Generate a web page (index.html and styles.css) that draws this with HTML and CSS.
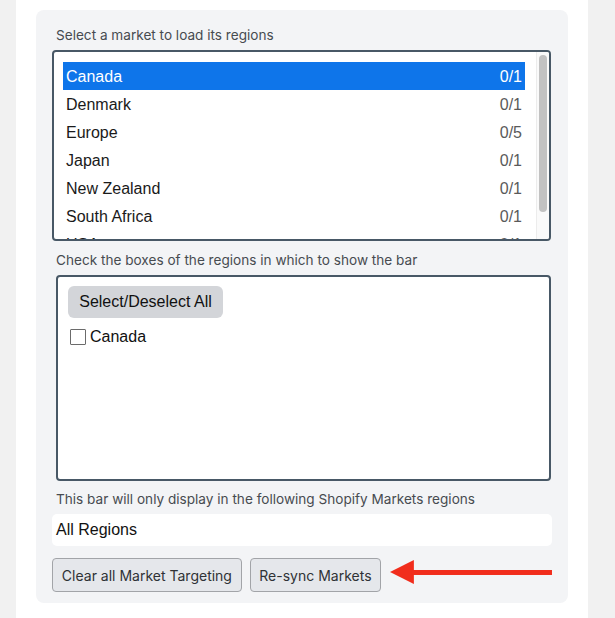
FILE: index.html
```html
<!DOCTYPE html>
<html>
<head>
<meta charset="utf-8">
<link rel="stylesheet" href="styles.css">
</head>
<body>
<div class="panel">
  <div class="card">
    <div class="label">Select a market to load its regions</div>
    <div class="listbox">
      <div class="list">
        <div class="row selected"><span>Canada</span><span class="count">0/1</span></div>
        <div class="row"><span>Denmark</span><span class="count">0/1</span></div>
        <div class="row"><span>Europe</span><span class="count">0/5</span></div>
        <div class="row"><span>Japan</span><span class="count">0/1</span></div>
        <div class="row"><span>New Zealand</span><span class="count">0/1</span></div>
        <div class="row"><span>South Africa</span><span class="count">0/1</span></div>
        <div class="row"><span>USA</span><span class="count">0/1</span></div>
      </div>
      <div class="scrollbar"><div class="thumb"></div></div>
    </div>
    <div class="label gap">Check the boxes of the regions in which to show the bar</div>
    <div class="regions">
      <button class="select-all">Select/Deselect All</button>
      <label class="check"><span class="box"></span><span>Canada</span></label>
    </div>
    <div class="label gap2">This bar will only display in the following Shopify Markets regions</div>
    <div class="field">All Regions</div>
    <div class="actions">
      <button class="btn btn-clear">Clear all Market Targeting</button>
      <button class="btn btn-sync">Re-sync Markets</button>
      <svg class="arrow" width="163" height="24" viewBox="0 0 163 24">
        <polygon points="0,12 24,0 24,24" fill="#f12d1c"/>
        <rect x="22" y="10" width="141" height="5" fill="#f12d1c"/>
      </svg>
    </div>
  </div>
</div>
</body>
</html>
```
FILE: styles.css
```css
html, body {
  margin: 0;
  padding: 0;
}
body {
  background: #f1f1f1;
  height: 618px;
  overflow: hidden;
}
.panel {
  margin-left: 16px;
  width: 572px;
  height: 618px;
  background: #ffffff;
  box-sizing: border-box;
  padding: 10px 20px 0 20px;
}
.card {
  background: #f3f4f6;
  border-radius: 8px;
  padding: 16px 16px 11px 16px;
}
.label {
  font-family: Inter, "Liberation Sans", sans-serif;
  font-size: 13.6px;
  line-height: 18px;
  color: #474b50;
  padding-left: 4px;
  white-space: nowrap;
}
.label.gap { margin-top: 10px; }
.label.gap2 { margin-top: 9px; }
.listbox {
  margin-top: 6px;
  width: 499px;
  height: 191px;
  box-sizing: border-box;
  border: 2px solid #485866;
  border-radius: 4px;
  background: #fff;
  display: flex;
  overflow: hidden;
}
.list {
  flex: 1;
  padding: 10px 11px 0 9px;
  overflow: hidden;
}
.row {
  height: 28px;
  display: flex;
  justify-content: space-between;
  align-items: center;
  padding: 1px 3px 0 3px;
  box-sizing: border-box;
  font-family: "Liberation Sans", Arial, sans-serif;
  font-size: 16px;
  color: #1a1a1a;
}
.row .count { color: #5a5a5a; }
.row.selected {
  background: #0e75ea;
  color: #fff;
}
.row.selected .count { color: #fff; }
.scrollbar {
  width: 13px;
  border-left: 1px solid #ececec;
  background: #fafafa;
  padding-top: 3px;
  box-sizing: border-box;
}
.thumb {
  width: 8px;
  height: 157px;
  margin-left: 2px;
  border-radius: 4px;
  background: #c2c2c2;
}
.regions {
  margin: 6px 0 0 4px;
  width: 495px;
  height: 206px;
  box-sizing: border-box;
  border: 2px solid #485866;
  border-radius: 4px;
  background: #fff;
  padding: 9px 10px;
}
.select-all {
  display: block;
  height: 32px;
  width: 155px;
  padding: 0;
  border: none;
  border-radius: 6px;
  background: #d3d5d9;
  font-family: "Liberation Sans", Arial, sans-serif;
  font-size: 16px;
  color: #111;
  white-space: nowrap;
}
.check {
  display: flex;
  align-items: center;
  margin-top: 10px;
  margin-left: 2px;
  font-family: "Liberation Sans", Arial, sans-serif;
  font-size: 16px;
  color: #111;
}
.box {
  width: 14px;
  height: 14px;
  border: 1px solid #6b6b6b;
  border-radius: 1px;
  background: #fff;
  margin-right: 4px;
}
.field {
  margin-top: 6px;
  height: 32px;
  background: #fff;
  border-radius: 5px;
  padding-left: 4px;
  display: flex;
  align-items: center;
  font-family: "Liberation Sans", Arial, sans-serif;
  font-size: 16px;
  color: #111;
}
.actions {
  margin-top: 12px;
  display: flex;
  align-items: flex-start;
  gap: 8px;
}
.btn {
  height: 34px;
  box-sizing: border-box;
  border: 1px solid #a2a4a8;
  border-radius: 4px;
  background: #e5e7eb;
  font-family: Inter, "Liberation Sans", sans-serif;
  font-size: 14px;
  color: #2f3236;
  padding: 0;
  white-space: nowrap;
}
.btn-clear { width: 191px; }
.btn-sync { width: 132px; }
.arrow {
  margin-top: 2px;
  margin-left: 1px;
}
```
